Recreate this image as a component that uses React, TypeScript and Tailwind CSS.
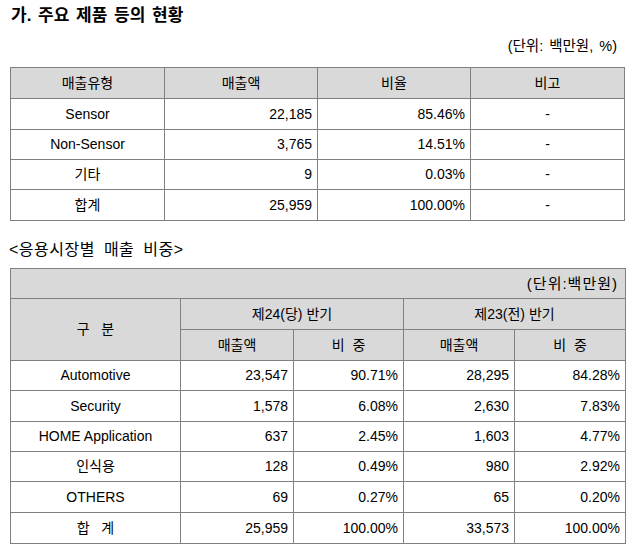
const products = [
  { type: 'Sensor', sales: '22,185', ratio: '85.46%', note: '-' },
  { type: 'Non-Sensor', sales: '3,765', ratio: '14.51%', note: '-' },
  { type: '기타', sales: '9', ratio: '0.03%', note: '-' },
  { type: '합계', sales: '25,959', ratio: '100.00%', note: '-' },
];

const markets = [
  { name: 'Automotive', cur: '23,547', curPct: '90.71%', prev: '28,295', prevPct: '84.28%', h: 'h-[30px]' },
  { name: 'Security', cur: '1,578', curPct: '6.08%', prev: '2,630', prevPct: '7.83%', h: 'h-[31px]' },
  { name: 'HOME Application', cur: '637', curPct: '2.45%', prev: '1,603', prevPct: '4.77%', h: 'h-[30px]' },
  { name: '인식용', cur: '128', curPct: '0.49%', prev: '980', prevPct: '2.92%', h: 'h-[30px]' },
  { name: 'OTHERS', cur: '69', curPct: '0.27%', prev: '65', prevPct: '0.20%', h: 'h-[31px]' },
  { name: '합   계', cur: '25,959', curPct: '100.00%', prev: '33,573', prevPct: '100.00%', h: 'h-[31px]' },
];

const cell = 'border border-[#808080] p-0 whitespace-pre';
const head = `${cell} bg-[#d9d9d9] text-center font-normal`;
const num = `${cell} text-right pr-[5px]`;
const mid = `${cell} text-center`;

export default function App() {
  return (
    <div className="w-[631px] h-[548px] bg-white text-black font-['Liberation_Sans','Noto_Sans_CJK_KR',sans-serif] text-[14px] leading-none overflow-hidden">
      <div className="pl-[11px] pt-[7px] text-[17px] font-bold [word-spacing:2px]">가. 주요 제품 등의 현황</div>

      <div className="mt-[15px] pr-[14px] text-right text-[14.5px] [word-spacing:2px]">(단위: 백만원, %)</div>

      {/* 주요 제품 표 */}
      <table className="ml-[10px] mt-[13px] w-[614px] table-fixed border-collapse border border-black">
        <colgroup>
          <col className="w-[154px]" />
          <col className="w-[153px]" />
          <col className="w-[153px]" />
          <col className="w-[154px]" />
        </colgroup>
        <thead>
          <tr className="h-[31px]">
            <th className={head}>매출유형</th>
            <th className={head}>매출액</th>
            <th className={head}>비율</th>
            <th className={head}>비고</th>
          </tr>
        </thead>
        <tbody>
          {products.map((p, i) => (
            <tr key={p.type} className={i === 0 || i === 3 ? 'h-[31px]' : 'h-[30px]'}>
              <td className={mid}>{p.type}</td>
              <td className={num}>{p.sales}</td>
              <td className={num}>{p.ratio}</td>
              <td className={mid}>{p.note}</td>
            </tr>
          ))}
        </tbody>
      </table>

      <div className="pl-[9px] mt-[21px] text-[16px] tracking-[0.5px] [word-spacing:4px]">&lt;응용시장별 매출 비중&gt;</div>

      {/* 응용시장별 표 */}
      <table className="ml-[10px] mt-[10px] w-[615px] table-fixed border-collapse border border-black">
        <colgroup>
          <col className="w-[170px]" />
          <col className="w-[113px]" />
          <col className="w-[110px]" />
          <col className="w-[111px]" />
          <col className="w-[111px]" />
        </colgroup>
        <thead>
          <tr className="h-[30px]">
            <th colSpan={5} className={`${head} text-right pr-[7px] text-[15px] tracking-[1px]`}>(단위:백만원)</th>
          </tr>
          <tr className="h-[31px]">
            <th rowSpan={2} className={head}>{'구   분'}</th>
            <th colSpan={2} className={head}>제24(당) 반기</th>
            <th colSpan={2} className={head}>제23(전) 반기</th>
          </tr>
          <tr className="h-[31px]">
            <th className={head}>매출액</th>
            <th className={head}>{'비  중'}</th>
            <th className={head}>매출액</th>
            <th className={head}>{'비  중'}</th>
          </tr>
        </thead>
        <tbody>
          {markets.map((m) => (
            <tr key={m.name} className={m.h}>
              <td className={mid}>{m.name}</td>
              <td className={num}>{m.cur}</td>
              <td className={num}>{m.curPct}</td>
              <td className={num}>{m.prev}</td>
              <td className={num}>{m.prevPct}</td>
            </tr>
          ))}
        </tbody>
      </table>
    </div>
  );
}
